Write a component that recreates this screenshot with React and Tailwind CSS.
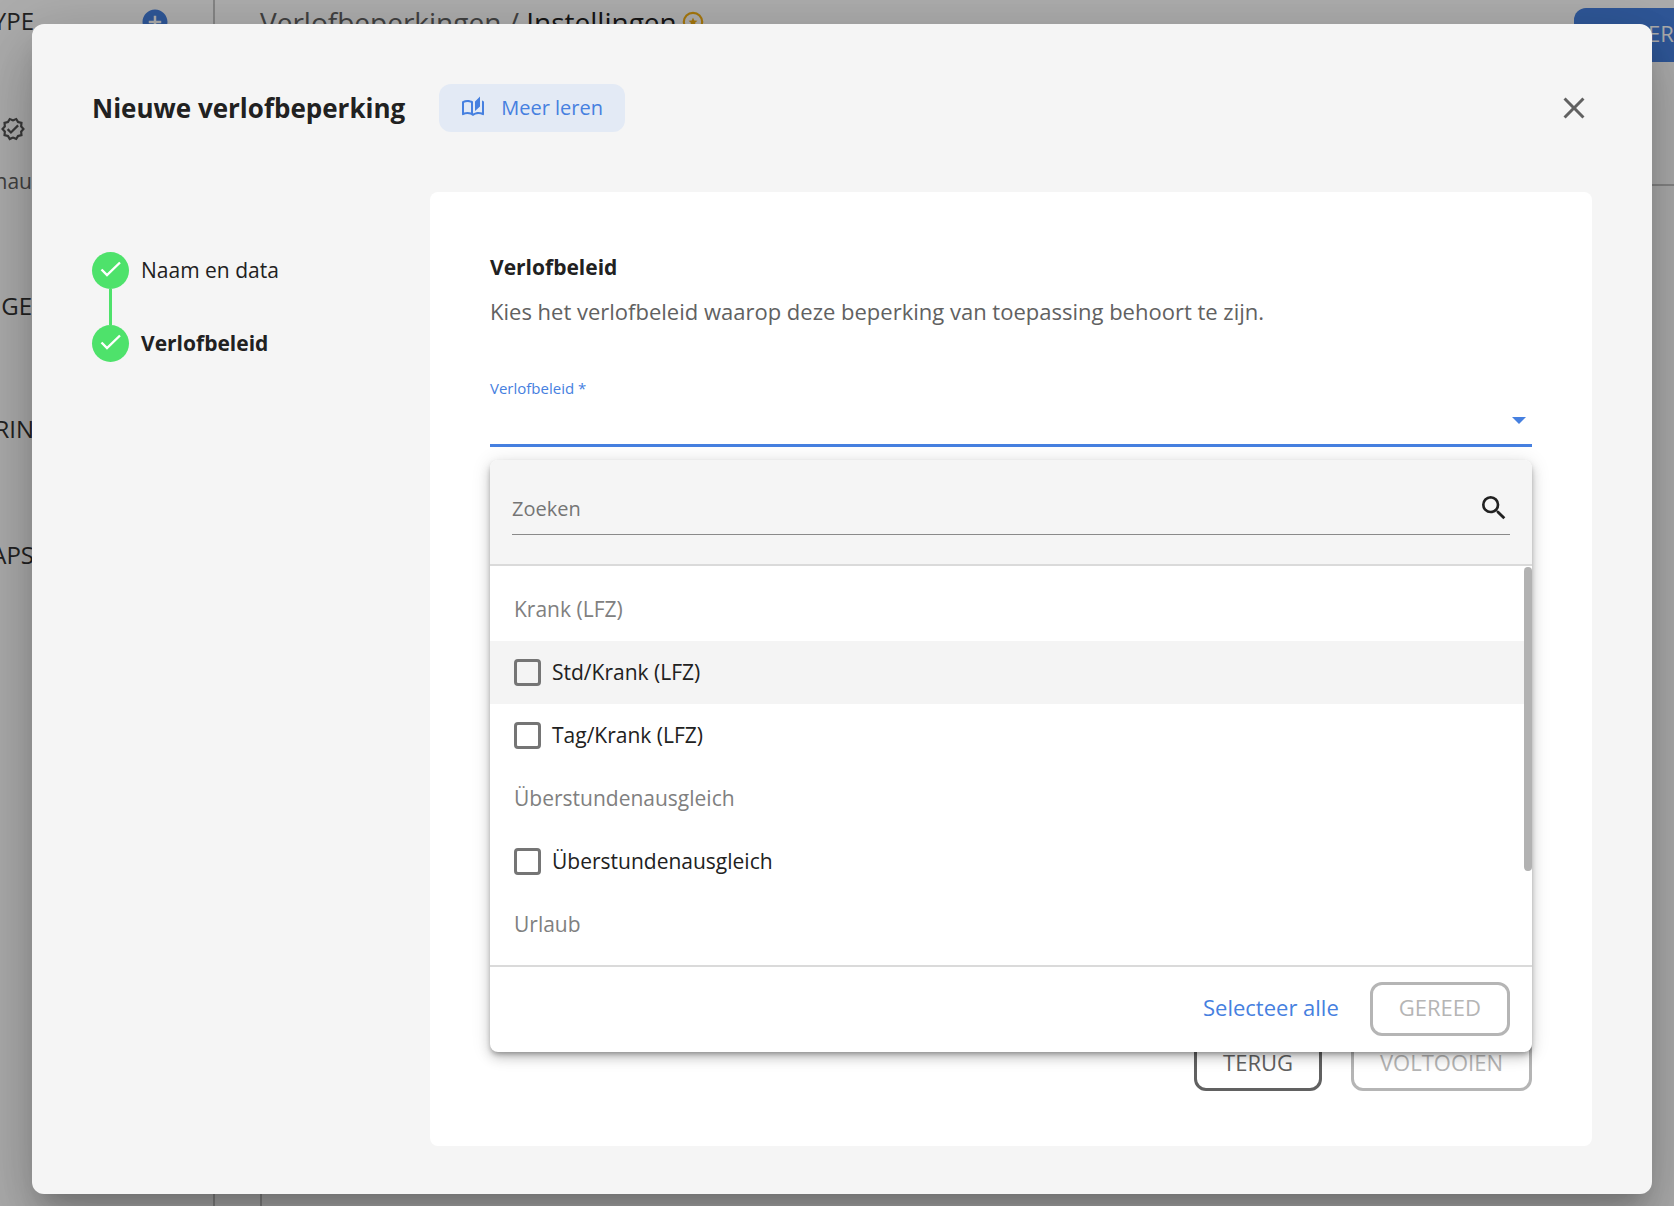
import React, { useState } from 'react';
import { MdAddCircle, MdClose, MdOutlineAutoStories, MdOutlineVerified, MdSearch } from 'react-icons/md';

const policyGroups = [
    { name: 'Krank (LFZ)', options: ['Std/Krank (LFZ)', 'Tag/Krank (LFZ)'] },
    { name: 'Überstundenausgleich', options: ['Überstundenausgleich'] },
    { name: 'Urlaub', options: [] },
];

const allOptions = policyGroups.flatMap((group) => group.options);

const StepCheck = () => (
    <span className="flex size-[37px] items-center justify-center rounded-full bg-[#4ee26b]">
        <svg viewBox="0 0 37 37" className="size-full" fill="none" stroke="white" strokeWidth="2.4">
            <path d="M9.5 17.5 L15 23 L28 10.5" strokeLinejoin="miter" />
        </svg>
    </span>
);

const StarBadge = () => (
    <svg viewBox="0 0 24 24" className="size-6" aria-hidden="true">
        <circle cx="12" cy="12" r="9.2" fill="none" stroke="#f5b014" strokeWidth="2.2" />
        <path fill="#f5b014" d="M12 7.4l1.3 3 3.2.3-2.4 2.1.7 3.2-2.8-1.7-2.8 1.7.7-3.2-2.4-2.1 3.2-.3z" />
    </svg>
);

const NavText = ({ className = '', children }) => (
    <div className={`flex justify-end whitespace-nowrap leading-8 ${className}`}>{children}</div>
);

const Page = () => (
    <div className="absolute inset-0 flex overflow-hidden bg-white">
        <nav className="w-[215px] shrink-0 border-r-2 border-[#c4c4c4] pt-[5px] text-2xl text-[#333]">
            <div className="flex items-start gap-[106px]">
                <NavText className="w-[34px]">TYPE</NavText>
                <MdAddCircle className="mt-0.5 size-[30px] text-[#4680e0]" />
            </div>
            <MdOutlineVerified className="mt-[79px] size-[26px] text-[#555]" />
            <NavText className="mt-[23px] w-8 text-[21px] text-[#616161]">nau</NavText>
            <NavText className="mt-[93px] w-8">GE</NavText>
            <NavText className="mt-[91px] w-[34px]">RIN</NavText>
            <NavText className="mt-[94px] w-[34px]">APS</NavText>
        </nav>
        <div className="flex min-w-0 flex-1 flex-col pl-[45px]">
            <div className="flex h-[184px] shrink-0 items-start justify-between">
                <div className="flex items-center gap-1 pt-1 text-[28px] leading-9">
                    <h1 className="text-[#222]">
                        <span className="text-[#616161]">Verlofbeperkingen / </span>
                        Instellingen
                    </h1>
                    <StarBadge />
                </div>
                <button type="button" className="-mr-[86px] mt-2 h-[54px] shrink-0 rounded-xl bg-[#4680e0] px-[34px] pb-1 text-[22px] text-white">
                    BEPERKING
                </button>
            </div>
            <div className="flex-1 border-l-2 border-t-2 border-[#c4c4c4]" />
        </div>
    </div>
);

const OutlineButton = ({ disabled = false, children, ...props }) => (
    <button
        type="button"
        disabled={disabled}
        className="h-[54px] rounded-xl border-3 border-[#616161] px-[26px] pb-1 text-[22px] text-[#616161] disabled:border-[#b5b5b5] disabled:text-[#b5b5b5]"
        {...props}
    >
        {children}
    </button>
);

const PolicyPanel = ({ selected, setSelected }) => {
    const [query, setQuery] = useState('');

    const toggle = (option) => {
        setSelected(selected.includes(option) ? selected.filter((o) => o !== option) : [...selected, option]);
    };

    return (
        <div className="absolute inset-x-0 top-full z-10 mt-[13px] overflow-hidden rounded-lg bg-white shadow-[0_3px_5px_-1px_rgba(0,0,0,0.3),0_6px_12px_0_rgba(0,0,0,0.16),0_2px_20px_0_rgba(0,0,0,0.12)]">
            <div className="border-b-2 border-[#dadada] bg-[#f5f5f5] px-[22px] pt-[22px] pb-[29px]">
                <div className="flex h-[53px] items-center border-b border-[#8a8a8a]">
                    <input
                        type="text"
                        aria-label="Zoeken"
                        placeholder="Zoeken"
                        value={query}
                        onChange={(e) => setQuery(e.target.value)}
                        className="h-full min-w-0 flex-1 bg-transparent text-xl outline-none placeholder:text-[#757575]"
                    />
                    <MdSearch className="size-8 text-[#212121]" />
                </div>
            </div>
            <div className="relative h-[399px] overflow-hidden pt-3 text-[21px]">
                {policyGroups.map((group) => (
                    <div key={group.name}>
                        <div className="flex h-[63px] items-center px-6 text-[#808080]">{group.name}</div>
                        {group.options
                            .filter((option) => option.toLowerCase().includes(query.toLowerCase()))
                            .map((option) => (
                                <label
                                    key={option}
                                    className={`flex h-[63px] items-center gap-[11px] px-6 text-[#212121] ${option === allOptions[0] ? 'bg-[#f4f4f4]' : ''}`}
                                >
                                    <input
                                        type="checkbox"
                                        checked={selected.includes(option)}
                                        onChange={() => toggle(option)}
                                        className="size-[27px] appearance-none rounded border-3 border-[#757575] checked:bg-[#4680e0]"
                                    />
                                    {option}
                                </label>
                            ))}
                    </div>
                ))}
                <div className="absolute top-px right-0 h-[304px] w-2 rounded-full bg-[#b2b2b2]" />
            </div>
            <div className="flex items-center justify-end gap-[31px] border-t-2 border-[#dadada] px-[22px] pt-[15px] pb-4">
                <button type="button" onClick={() => setSelected(allOptions)} className="pb-1 text-[22px] font-medium text-[#4680e0]">
                    Selecteer alle
                </button>
                <OutlineButton disabled={selected.length === 0}>GEREED</OutlineButton>
            </div>
        </div>
    );
};

const App = () => {
    const [selected, setSelected] = useState([]);

    return (
        <div className="relative min-h-screen font-['Open_Sans',sans-serif]">
            <Page />
            <div className="relative flex min-h-screen bg-black/32 pt-6 pr-[22px] pb-3 pl-8">
                <div
                    role="dialog"
                    aria-labelledby="dialog-title"
                    className="flex flex-1 flex-col rounded-xl bg-[#f5f5f5] px-[60px] pt-[60px] pb-12 text-[#212121] shadow-[0_16px_22px_-10px_rgba(0,0,0,0.2),0_36px_57px_4px_rgba(0,0,0,0.14),0_14px_69px_12px_rgba(0,0,0,0.12)]"
                >
                    <header className="flex h-12 items-center">
                        <h2 id="dialog-title" className="text-[26px] font-bold">Nieuwe verlofbeperking</h2>
                        <a href="#meer-leren" className="ml-[34px] flex h-12 items-center gap-4 rounded-xl bg-[#e3eaf5] px-[22px] text-xl text-[#4680e0]">
                            <MdOutlineAutoStories className="size-6" />
                            Meer leren
                        </a>
                        <button type="button" aria-label="Sluiten" className="ml-auto text-[#616161]">
                            <MdClose className="size-9" />
                        </button>
                    </header>
                    <div className="mt-[60px] flex flex-1">
                        <ol className="w-[338px] shrink-0 pt-[60px] text-[21px]">
                            <li className="flex items-center gap-3">
                                <StepCheck />
                                Naam en data
                            </li>
                            <li aria-hidden="true" className="ml-[17px] h-9 w-[3px] bg-[#4ee26b]" />
                            <li className="flex items-center gap-3 font-bold">
                                <StepCheck />
                                Verlofbeleid
                            </li>
                        </ol>
                        <section className="flex min-w-0 flex-1 flex-col rounded-lg bg-white px-[60px] pt-[60px] pb-[55px]">
                            <h3 className="text-[21px] leading-[30px] font-bold">Verlofbeleid</h3>
                            <p className="mt-3.5 text-[22px] leading-[30px] text-[#616161]">
                                Kies het verlofbeleid waarop deze beperking van toepassing behoort te zijn.
                            </p>
                            <div className="relative mt-[51px]">
                                <label htmlFor="policy" className="block text-[15px] leading-[22px] text-[#4680e0]">
                                    Verlofbeleid *
                                </label>
                                <div className="relative">
                                    <select id="policy" className="block h-12 w-full appearance-none border-b-3 border-[#4680e0] bg-transparent text-xl outline-none" />
                                    <svg viewBox="0 0 14 7" className="pointer-events-none absolute top-[18px] right-1.5 h-[7px] w-3.5" fill="#4680e0">
                                        <path d="M0 0h14L7 7z" />
                                    </svg>
                                </div>
                                <PolicyPanel selected={selected} setSelected={setSelected} />
                            </div>
                            <footer className="mt-auto flex justify-end gap-[29px]">
                                <OutlineButton>TERUG</OutlineButton>
                                <OutlineButton disabled={selected.length === 0}>VOLTOOIEN</OutlineButton>
                            </footer>
                        </section>
                    </div>
                </div>
            </div>
        </div>
    );
};

export default App;
